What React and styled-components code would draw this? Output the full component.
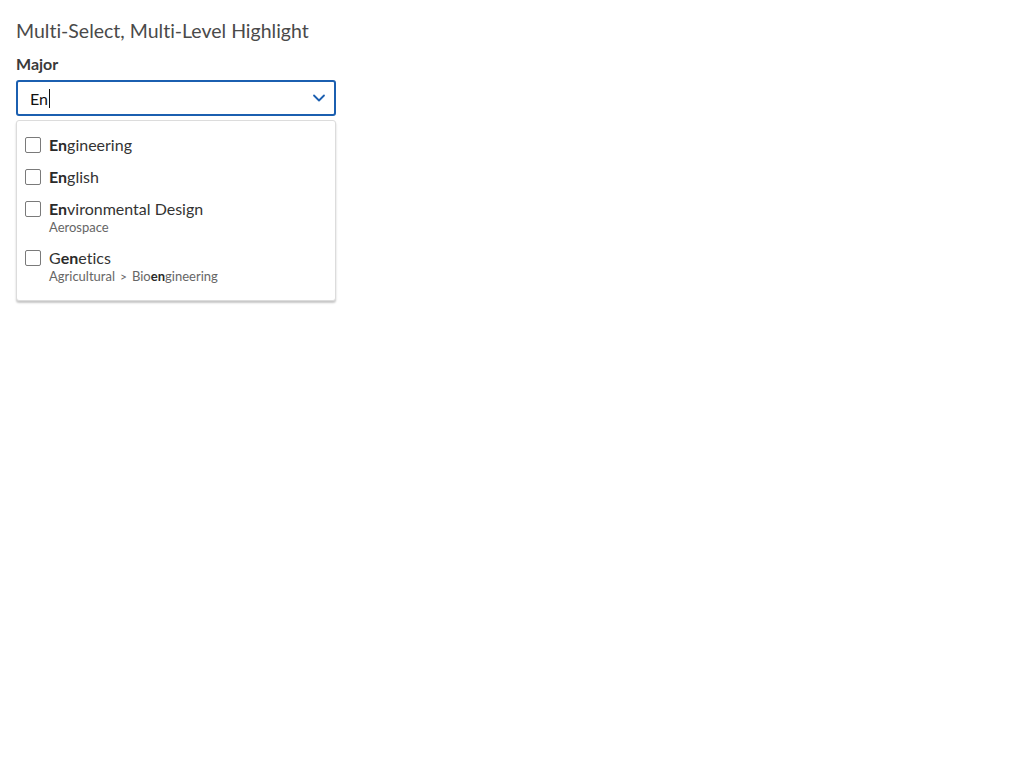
import React from "react";
import styled, { createGlobalStyle } from "styled-components";

const Global = createGlobalStyle`
  html, body { margin: 0; padding: 0; background: #fff; }
  body {
    font-family: Lato, "Noto Sans", sans-serif;
    color: #333;
    font-variant-ligatures: none;
  }
`;

const Page = styled.div`
  padding: 16px 16px;
`;

const Title = styled.h1`
  margin: 2px 0 0;
  font-size: 19.5px;
  line-height: 25px;
  font-weight: 400;
  color: #4a4a4a;
`;

const Field = styled.div`
  width: 320px;
  margin-top: 10px;
`;

const Label = styled.div`
  font-size: 16px;
  font-weight: 700;
  line-height: 22px;
  color: #3a3a3a;
  margin-bottom: 5px;
`;

const InputBox = styled.div`
  box-sizing: border-box;
  height: 36px;
  border: 2px solid #1b5fb0;
  border-radius: 3px;
  display: flex;
  align-items: center;
  padding: 0 8px 0 12px;
`;

const InputText = styled.span`
  flex: 1;
  font-size: 16px;
  color: #111;
  display: flex;
  align-items: center;
`;

const Caret = styled.span`
  display: inline-block;
  width: 1px;
  height: 19px;
  background: #111;
  margin-left: 1px;
`;

const Menu = styled.div`
  margin-top: 4px;
  box-sizing: border-box;
  border: 1px solid #dcdcdc;
  border-radius: 3px;
  box-shadow: 0 2px 2px rgba(0, 0, 0, 0.22);
  padding: 8px 0;
  background: #fff;
`;

const Row = styled.div`
  display: flex;
  align-items: flex-start;
  padding: ${(p) => (p.$sub ? "4px 8px 7px" : "4px 8px")};
  gap: 8px;
`;

const Box = styled.span`
  box-sizing: border-box;
  flex: none;
  width: 16px;
  height: 16px;
  margin-top: 4px;
  border: 1px solid #7a7a7a;
  border-radius: 2px;
  background: #fff;
`;

const Texts = styled.div`
  display: flex;
  flex-direction: column;
`;

const Main = styled.div`
  font-size: 16px;
  line-height: 24px;
  color: #333;
`;

const Sub = styled.div`
  font-size: 13px;
  line-height: 16px;
  margin-top: -2px;
  color: #666;
`;

const Sep = styled.span`
  margin: 0 5px;
  font-size: 12px;
`;

const Hl = styled.b`
  font-weight: 700;
  color: #2a2a2a;
`;

function Chevron() {
  return (
    <svg width="14" height="14" viewBox="0 0 14 14" fill="none">
      <path d="M2 4.5 L7 9.5 L12 4.5" stroke="#1b5fb0" strokeWidth="1.8" strokeLinecap="round" strokeLinejoin="round" />
    </svg>
  );
}

function highlight(text, q) {
  const i = text.toLowerCase().indexOf(q.toLowerCase());
  if (i < 0) return text;
  return (
    <>
      {text.slice(0, i)}
      <Hl>{text.slice(i, i + q.length)}</Hl>
      {text.slice(i + q.length)}
    </>
  );
}

const items = [
  { label: "Engineering" },
  { label: "English" },
  { label: "Environmental Design", path: ["Aerospace"] },
  { label: "Genetics", path: ["Agricultural", "Bioengineering"] },
];

export default function App() {
  const q = "En";
  return (
    <Page>
      <Global />
      <Title>Multi-Select, Multi-Level Highlight</Title>
      <Field>
        <Label>Major</Label>
        <InputBox>
          <InputText>
            {q}
            <Caret />
          </InputText>
          <Chevron />
        </InputBox>
        <Menu>
          {items.map((it) => (
            <Row key={it.label} $sub={!!it.path}>
              <Box />
              <Texts>
                <Main>{highlight(it.label, q)}</Main>
                {it.path && (
                  <Sub>
                    {it.path.map((p, i) => (
                      <React.Fragment key={p}>
                        {i > 0 && <Sep>&gt;</Sep>}
                        {highlight(p, q)}
                      </React.Fragment>
                    ))}
                  </Sub>
                )}
              </Texts>
            </Row>
          ))}
        </Menu>
      </Field>
    </Page>
  );
}
